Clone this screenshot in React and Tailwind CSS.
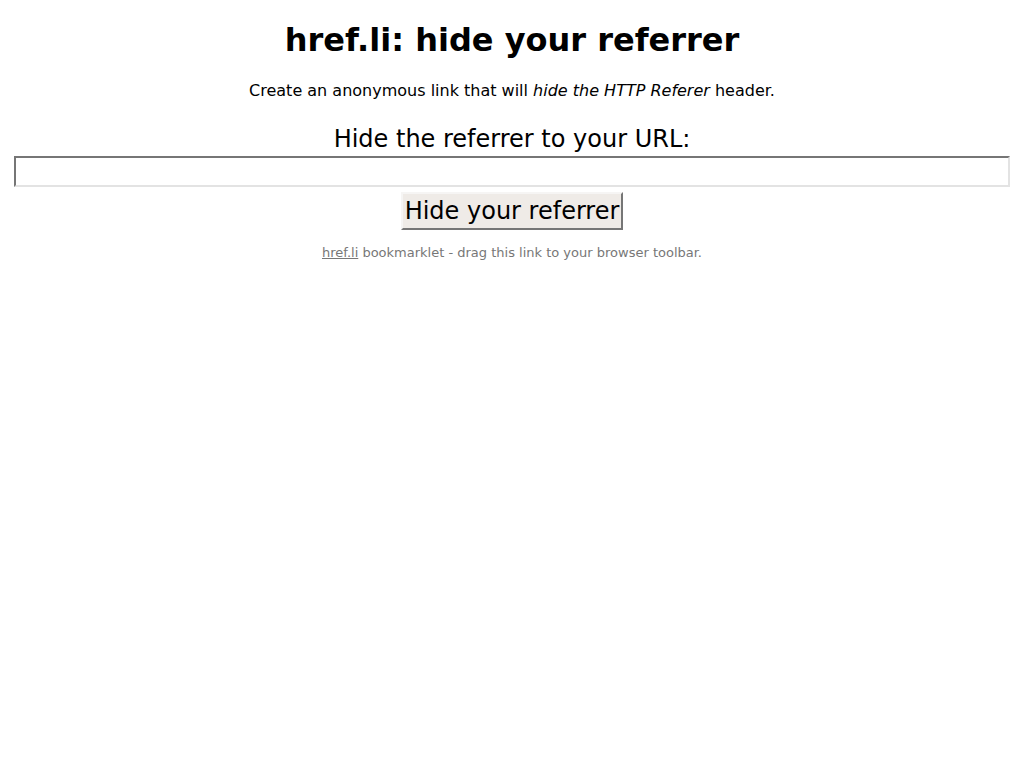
export default function App() {
  return (
    <div className="min-h-screen bg-white text-center text-black">
      <div className="font-['DejaVu_Sans',sans-serif] pt-[22px]">
        <h1 className="text-[32px] font-bold leading-[37px]">href.li: hide your referrer</h1>

        <p className="mt-[22px] text-base leading-[19px]">
          Create an anonymous link that will <em>hide the HTTP Referer</em> header.
        </p>

        <form className="mt-[25px]" onSubmit={(e) => e.preventDefault()}>
          <label className="block mb-[3px] text-[24px] leading-[28px]">Hide the referrer to your URL:</label>
          <input
            type="text"
            className="block mx-[14px] w-[996px] h-[31px] bg-white border-2 border-t-[#767676] border-l-[#767676] border-b-[#e3e3e3] border-r-[#e3e3e3] border-solid outline-none"
          />
          <button
            type="submit"
            className="mt-[5px] inline-block h-[38px] px-[2px] text-[24px] leading-[28px] bg-[#efebe7] border-2 border-t-[#f6f5f4] border-l-[#f6f5f4] border-b-[#767676] border-r-[#767676]"
          >
            Hide your referrer
          </button>
        </form>

        <p className="mt-[15px] text-[13px] leading-[15px] text-[#777]">
          <a href="#" className="underline text-[#777]">href.li</a> bookmarklet - drag this link to your browser toolbar.
        </p>
      </div>
    </div>
  );
}
